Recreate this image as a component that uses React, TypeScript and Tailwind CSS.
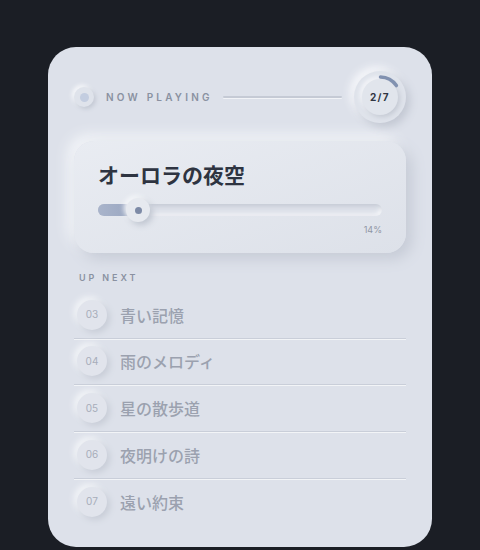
import React from 'react'

const queue = [
  { no: '03', title: '青い記憶' },
  { no: '04', title: '雨のメロディ' },
  { no: '05', title: '星の散歩道' },
  { no: '06', title: '夜明けの詩' },
  { no: '07', title: '遠い約束' },
]

const jp = { fontFamily: '"Noto Sans CJK JP", "Noto Sans", sans-serif' }
const latin = { fontFamily: 'Inter, "Noto Sans", sans-serif' }

function TrackRing() {
  // 2/7 progress arc, drawn from 12 o'clock clockwise
  const r = 20
  const a = (55 * Math.PI) / 180
  const x = 26 + r * Math.sin(a)
  const y = 26 - r * Math.cos(a)
  return (
    <div className="relative flex h-[52px] w-[52px] items-center justify-center rounded-full bg-[#dfe3eb] shadow-[4px_4px_8px_#c2c7d2,-4px_-4px_8px_#f7f8fb]">
      <svg className="absolute inset-0" width="52" height="52" viewBox="0 0 52 52">
        <path
          d={`M 26.5 ${26 - r} A ${r} ${r} 0 0 1 ${x.toFixed(2)} ${y.toFixed(2)}`}
          fill="none"
          stroke="#8191b0"
          strokeWidth="3.5"
          strokeLinecap="round"
        />
      </svg>
      <div className="flex h-[36px] w-[36px] items-center justify-center rounded-full bg-[#e1e5ec] shadow-[2px_2px_5px_#c4c9d3,-2px_-2px_4px_#f7f8fb]">
        <span className="text-[10px] font-bold tracking-[0.14em] text-[#2f3542]" style={latin}>
          2/7
        </span>
      </div>
    </div>
  )
}

export default function App() {
  return (
    <div className="flex min-h-[550px] items-start justify-center bg-[#1b1e25] pt-[47px]">
      <div className="w-[384px] rounded-[28px] bg-[#dde1ea] px-[26px] pb-[22px] pt-[24px]">
        {/* header */}
        <div className="flex items-center">
          <div className="flex h-5 w-5 items-center justify-center rounded-full bg-[#dfe3eb] shadow-[2px_2px_4px_#c3c8d3,-2px_-2px_4px_#f8f9fb]">
            <div className="h-[9px] w-[9px] rounded-full bg-[#c3cde0]" />
          </div>
          <span
            className="ml-3 text-[10px] font-semibold tracking-[0.32em] text-[#8a91a1]"
            style={latin}
          >
            NOW PLAYING
          </span>
          <div className="ml-[10px] mr-3 h-[2px] flex-1 rounded-full bg-[#c5cad5] shadow-[0_1px_0_#f1f3f7]" />
          <TrackRing />
        </div>

        {/* current track */}
        <div className="mt-[18px] rounded-[20px] bg-gradient-to-br from-[#e9ecf2] to-[#dde1e9] px-6 pb-[16px] pt-[18px] shadow-[6px_6px_14px_#c6cbd6,-6px_-6px_14px_#f4f6f9]">
          <h1 className="text-[21px] font-bold leading-[30px] text-[#2e3441]" style={jp}>
            オーロラの夜空
          </h1>
          <div className="relative mt-[15px] h-3 rounded-full bg-[#dde1e9] shadow-[inset_2px_2px_4px_#c3c8d3,inset_-2px_-2px_4px_#f6f7fa]">
            <div className="h-3 w-[40px] rounded-full bg-gradient-to-r from-[#a9b4cb] to-[#97a4bf]" />
            <div className="absolute left-[28px] top-[-6px] flex h-6 w-6 items-center justify-center rounded-full bg-[#e6e9ef] shadow-[3px_3px_6px_#bfc5d0,-2px_-2px_5px_#f8f9fb]">
              <div className="h-[7px] w-[7px] rounded-full bg-[#7d8aa6]" />
            </div>
          </div>
          <div className="mt-[7px] text-right text-[9px] text-[#9096a5]" style={latin}>
            14%
          </div>
        </div>

        {/* queue */}
        <div
          className="ml-[5px] mt-[18px] text-[9px] font-semibold tracking-[0.32em] text-[#8a91a1]"
          style={latin}
        >
          UP NEXT
        </div>
        <ul className="mt-[8px]">
          {queue.map((t, i) => (
            <li
              key={t.no}
              className={
                i < queue.length - 1
                  ? 'flex h-[46.67px] items-center border-b border-[#c9ced9] shadow-[0_1px_0_#f2f4f7]'
                  : 'flex h-[46px] items-center'
              }
            >
              <div className="ml-[3px] flex h-[30px] w-[30px] items-center justify-center rounded-full bg-[#e1e4ec] shadow-[3px_3px_6px_#c8cdd7,-3px_-3px_6px_#f3f5f8]">
                <span className="text-[10px] text-[#a7adba]" style={latin}>
                  {t.no}
                </span>
              </div>
              <span className="ml-[13px] text-[16px] font-medium text-[#9ba1af]" style={jp}>
                {t.title}
              </span>
            </li>
          ))}
        </ul>
      </div>
    </div>
  )
}
